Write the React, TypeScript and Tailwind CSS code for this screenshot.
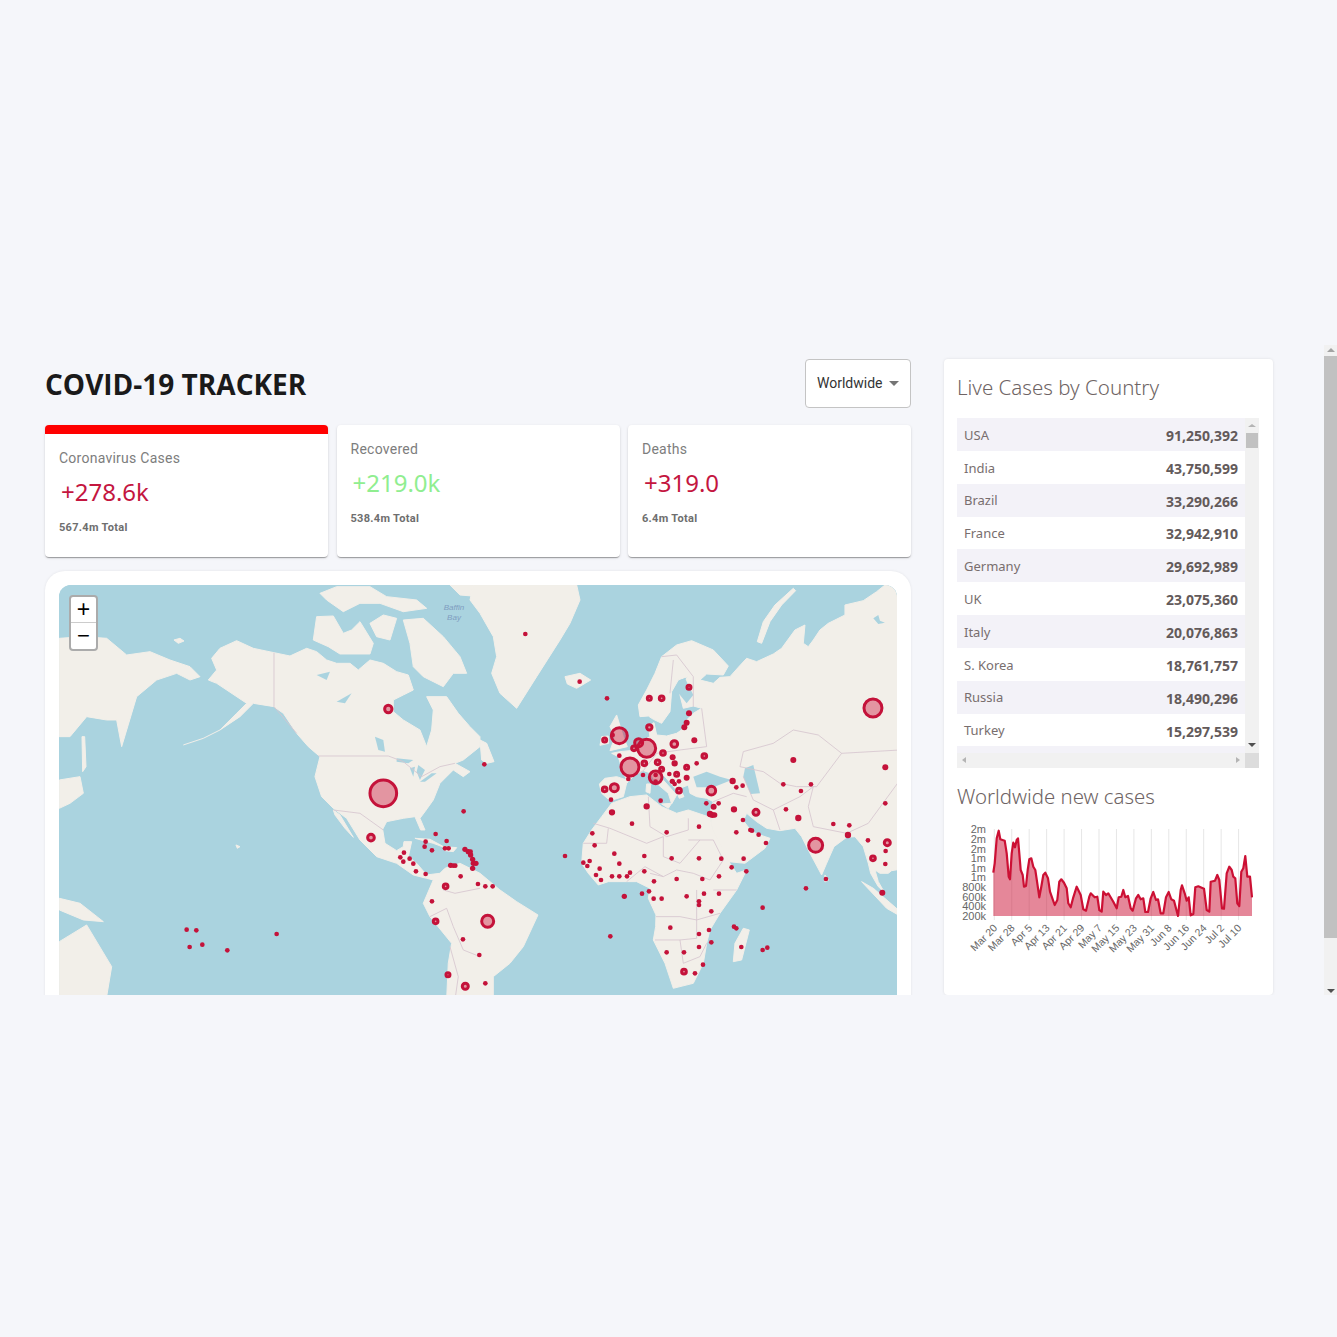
const SANS = "font-['Roboto',sans-serif]";
const rows: [string, string][] = [
  ["USA", "91,250,392"], ["India", "43,750,599"], ["Brazil", "33,290,266"], ["France", "32,942,910"],
  ["Germany", "29,692,989"], ["UK", "23,075,360"], ["Italy", "20,076,863"], ["S. Korea", "18,761,757"],
  ["Russia", "18,490,296"], ["Turkey", "15,297,539"],
];
const leftDots = [[1015,387,11],[1000,640,40],[963,773,10],[1241,694,2],[1157,762,2],[1127,785,2],[1124,800,2],[1146,811,2],[1190,783,2],[1185,805,2],[1196,805,2],[1245,808,3],[1255,815,3],[1262,825,3],[1268,838,3],[1270,850,3],[1278,850,3],[1268,865,3],[1262,815,2],[1202,856,3],[1210,857,2],[1216,857,2],[1062,818,2],[1051,832,2],[1079,836,2],[1060,845,2],[1090,851,2],[1098,874,2],[1127,882,2],[1232,889,2],[1284,912,2],[1187,919,7],[1146,964,2],[1157,1024,7],[1239,1078,2],[1194,1184,6],[1246,1219,9],[1288,1125,2],[410,1049,2],[439,1051,2],[419,1101,2],[457,1094,2],[532,1111,2],[680,1062,2]];
const rightDots = [[136,162,2],[299,305,2],[381,355,2],[13,553,2],[627,322,6],[508,355,6],[545,355,7],[627,400,4],[620,428,4],[613,442,4],[508,442,8],[418,467,24],[374,480,6],[398,465,2],[643,481,4],[476,488,12],[462,505,7],[500,505,27],[583,492,10],[418,527,2],[549,519,7],[673,528,7],[578,532,4],[584,550,5],[493,550,7],[533,547,7],[650,550,2],[450,561,27],[545,568,6],[620,562,6],[527,592,19],[590,583,6],[568,582,2],[489,585,2],[445,597,2],[620,593,4],[577,604,3],[597,604,2],[584,612,2],[527,585,2],[527,605,2],[403,623,12],[374,628,7],[597,632,7],[694,632,13],[758,603,5],[769,622,2],[788,617,2],[393,659,2],[542,662,2],[500,679,5],[396,697,5],[679,670,2],[701,680,4],[716,670,2],[762,688,5],[828,697,9],[690,702,5],[697,705,4],[704,705,3],[918,688,2],[955,714,5],[789,720,2],[811,750,2],[816,752,2],[769,757,2],[836,764,2],[858,789,2],[1007,796,21],[1060,732,2],[1108,736,2],[1104,765,5],[1164,781,2],[1222,788,9],[1217,813,2],[1179,835,7],[1216,852,2],[456,731,2],[560,757,2],[657,740,2],[337,760,2],[344,796,2],[403,821,2],[493,828,2],[575,835,2],[657,835,2],[724,836,2],[791,836,2],[255,828,2],[755,862,2],[310,848,2],[329,843,2],[322,858,2],[418,851,2],[359,866,2],[493,874,2],[799,874,2],[450,878,2],[348,885,2],[363,900,2],[396,889,2],[418,889,2],[441,889,2],[590,897,2],[667,897,2],[717,889,2],[522,904,2],[507,934,2],[486,941,2],[433,949,3],[521,956,2],[545,956,2],[620,949,2],[672,941,2],[717,941,2],[657,964,2],[657,975,2],[694,994,2],[848,983,2],[1038,897,2],[978,925,2],[1207,938,4],[762,1040,2],[769,1045,2],[571,1043,2],[687,1050,2],[657,1062,2],[391,1069,2],[694,1087,2],[784,1101,2],[657,1101,2],[848,1110,2],[862,1103,2],[560,1117,2],[612,1117,2],[669,1154,2],[612,1175,7],[645,1180,2],[16,1210,2],[23,1024,18],[940,540,4],[1216,562,4],[1179,384,27],[910,613,2],[963,633,2],[993,613,2],[1216,670,2],[16,919,2],[38,919,2]];

const leftLand = [
  "M485,235 L510,205 L560,182 L610,205 L672,218 L720,228 L770,205 L800,215 L830,240 L860,250 L900,250 L925,270 L960,240 L1000,250 L1040,275 L1075,285 L1090,330 L1060,345 L1030,360 L1030,395 L1060,420 L1110,450 L1130,500 L1145,450 L1150,390 L1130,350 L1190,350 L1225,400 L1260,440 L1290,470 L1290,500 L1240,540 L1215,550 L1260,575 L1240,590 L1210,570 L1170,610 L1150,660 L1125,695 L1110,715 L1125,750 L1112,750 L1095,710 L1060,715 L1010,725 L998,748 L1005,790 L1040,812 L1060,800 L1062,785 L1085,785 L1075,830 L1100,850 L1130,885 L1170,880 L1185,865 L1230,850 L1290,880 L1350,930 L1400,965 L1464,1005 L1420,1100 L1380,1150 L1330,1190 L1330,1260 L1190,1260 L1195,1150 L1205,1090 L1140,1010 L1120,970 L1150,900 L1130,895 L1090,885 L1040,850 L980,830 L930,780 L890,715 L850,685 L815,650 L795,590 L810,530 L775,500 L740,460 L700,400 L672,380 L610,370 L570,410 L510,450 L560,400 L590,370 L500,310 L475,300 L500,270 Z",
  "M850,690 L870,705 L910,772 L885,745 L855,705 Z",
  "M800,110 L850,108 L880,160 L905,150 L930,125 L970,190 L960,222 L870,222 L835,200 L790,180 Z",
  "M960,130 L1000,105 L1040,115 L1020,180 L980,170 Z",
  "M1060,120 L1120,115 L1180,170 L1230,230 L1250,280 L1210,280 L1180,320 L1120,290 L1090,260 L1080,190 Z",
  "M810,40 L860,20 L960,20 L1010,50 L1100,60 L1130,85 L1060,95 L990,70 L930,70 L880,95 L830,60 Z",
  "M1200,15 L1290,15 L1290,50 L1230,45 Z",
  "M28,175 L100,170 L170,175 L230,225 L300,215 L360,240 L420,260 L450,290 L420,300 L380,280 L320,300 L260,350 L215,500 L200,420 L170,420 L110,410 L60,470 L28,470 Z",
  "M96,470 L104,470 L108,560 L98,575 Z",
  "M28,600 L90,590 L100,640 L60,670 L28,685 Z",
  "M28,1085 L110,1035 L185,1160 L170,1250 L28,1250 Z",
  "M28,955 L90,970 L160,1025 L100,1020 L28,990 Z",
  "M372,180 L390,175 L402,183 L385,190 Z",
  "M1095,775 L1140,778 L1190,805 L1150,790 Z",
  "M1180,800 L1220,803 L1210,815 L1185,812 Z",
  "M558,795 L570,800 L562,805 Z",
];
const rightLand = [
  "M-20,15 L290,15 L300,60 L270,130 L240,180 L170,290 L110,385 L60,340 L35,280 L50,230 L40,170 L0,100 L-30,60 Z",
  "M255,290 L300,280 L332,300 L290,325 L262,312 Z",
  "M390,440 L410,405 L430,470 L442,500 L390,512 L405,470 Z",
  "M365,470 L385,468 L386,490 L360,496 Z",
  "M0,480 L20,490 L42,545 L20,550 L5,540 Z",
  "M365,640 L358,612 L375,595 L410,590 L440,600 L425,565 L415,530 L395,520 L420,515 L450,512 L470,500 L490,480 L510,470 L505,440 L522,428 L530,465 L560,468 L590,460 L612,445 L620,420 L640,400 L665,385 L640,378 L610,385 L600,345 L612,310 L622,290 L595,300 L575,335 L570,395 L545,430 L520,418 L505,408 L480,410 L475,375 L500,330 L525,280 L545,230 L590,195 L635,182 L700,210 L745,258 L730,285 L680,282 L660,300 L700,310 L720,292 L750,290 L775,262 L800,235 L830,245 L880,222 L905,205 L945,150 L975,135 L970,190 L985,200 L1000,180 L1020,150 L1045,130 L1095,105 L1095,75 L1150,62 L1190,35 L1215,15 L1260,15 L1260,868 L1235,872 L1225,880 L1200,880 L1185,870 L1195,905 L1212,935 L1195,920 L1172,880 L1165,850 L1150,800 L1125,770 L1100,772 L1062,800 L1040,850 L1025,885 L985,810 L965,770 L945,745 L900,752 L860,745 L830,725 L800,700 L790,722 L815,755 L840,765 L870,775 L855,805 L795,850 L745,845 L715,790 L697,745 L690,695 L700,665 L680,655 L650,650 L630,640 L625,615 L600,625 L612,650 L598,655 L585,625 L555,590 L528,566 L545,595 L590,645 L575,672 L565,640 L530,610 L510,578 L490,572 L465,585 L440,610 L430,650 L390,662 Z",
  "M395,670 L450,650 L500,645 L545,680 L590,700 L625,690 L690,712 L697,745 L750,850 L770,880 L800,870 L770,930 L720,1000 L690,1050 L680,1090 L670,1150 L640,1210 L580,1225 L555,1150 L520,1080 L527,1040 L528,1005 L505,955 L510,925 L470,905 L420,905 L385,905 L355,915 L325,880 L305,850 L310,790 L335,750 L365,710 Z",
  "M790,1045 L808,1050 L785,1140 L760,1145 L765,1090 Z",
  "M1145,905 L1180,925 L1255,990 L1255,1005 L1220,985 Z",
  "M1035,885 L1046,900 L1035,906 Z",
  "M940,25 L947,32 L905,75 L870,125 L845,190 L832,185 L850,125 L885,75 Z",
  "M500,612 L512,612 L510,640 L498,635 Z",
  "M545,672 L575,670 L565,685 Z",
];
const leftWater = [
  "M1040,535 L1090,540 L1075,550 L1040,545 Z", "M1080,565 L1095,560 L1090,590 Z", "M1105,555 L1125,570 L1110,600 L1100,575 Z", "M1110,605 L1145,580 L1160,580 L1125,605 Z",
  "M800,285 L840,275 L830,300 Z", "M860,365 L905,340 L885,370 Z", "M975,470 L1000,480 L1005,515 L985,510 Z",
];
const rightWater = [
  "M640,590 L680,575 L720,590 L755,600 L700,622 L650,622 Z",
  "M795,565 L820,555 L840,640 L812,642 L790,590 Z",
  "M600,300 L615,295 L640,345 L620,370 L600,345 Z",
  "M1180,115 L1195,105 L1200,122 L1215,128 L1195,132 Z",
];
const leftBorders = ["M672,218 L672,380 L740,460", "M805,528 L1015,528 L1060,545 L1115,590 L1170,560 L1215,550", "M850,690 L930,700 L1000,750", "M1180,930 L1215,940 L1290,925", "M1140,1010 L1190,985 L1210,1040 L1240,1110 L1290,1130", "M1200,1100 L1225,1190 L1215,1260"];
const rightBorders = [
  "M505,650 L510,740 L560,770 L625,750 L625,715", "M340,730 L390,745 L500,790 L550,770 L550,830 L600,850 L660,780", "M310,790 L380,790 L385,745", "M625,780 L700,780 L730,840 L690,900 L640,880 L590,870 L550,890 L510,880", "M440,905 L495,860 L550,890", "M528,1010 L600,1010 L650,1020 L650,1075 L600,1080 L525,1080", "M600,1080 L610,1150 L660,1130 L680,1090", "M650,930 L650,1020 L720,1000", "M700,930 L770,930",
  "M1260,510 L1085,520 L1015,465 L940,450 L880,490 L790,515 L780,560 L850,575", "M850,575 L900,610 L950,620 L1010,620 L1085,520", "M1000,620 L985,680 L1000,740 L1100,760 L1165,730 L1260,600", "M790,590 L820,660 L880,690 L900,750", "M700,665 L760,640 L800,650", "M880,690 L960,650 L1000,620", "M545,230 L590,225 L640,290 L640,380", "M570,340 L580,240", "M600,510 L680,500 L665,385", "M490,572 L530,520 L600,510", "M440,600 L490,572"];
const line = "130,188 134,160 140,85 146,62 151,88 164,92 170,130 176,200 180,208 185,130 190,98 195,112 200,90 204,85 208,130 212,180 218,195 222,230 228,228 233,180 238,148 244,145 250,170 256,180 262,220 268,262 274,230 280,195 286,188 294,205 300,245 306,262 314,285 322,270 328,215 334,208 342,218 350,235 355,280 362,292 370,262 380,230 392,255 400,298 408,302 418,260 422,250 434,262 442,260 448,300 455,305 460,245 468,255 475,250 490,275 500,295 506,262 514,260 520,240 526,262 534,258 542,295 548,302 558,265 565,255 572,268 580,265 586,306 594,306 602,265 610,246 618,270 624,268 632,310 640,310 648,262 656,246 664,268 672,272 684,318 692,240 696,226 704,250 710,272 716,262 722,316 730,312 736,232 745,229 762,236 770,300 778,305 782,215 795,212 802,195 808,210 816,295 822,296 830,190 838,170 845,180 850,200 856,205 862,280 868,288 874,185 880,175 886,138 892,200 900,200 906,262";
const yLabels = ["2m", "2m", "2m", "1m", "1m", "1m", "800k", "600k", "400k", "200k"];
const xLabels = ["Mar 20", "Mar 28", "Apr 5", "Apr 13", "Apr 21", "Apr 29", "May 7", "May 15", "May 23", "May 31", "Jun 8", "Jun 16", "Jun 24", "Jul 2", "Jul 10"];

function Dots({ data }: { data: number[][] }) {
  return (
    <>
      {data.map(([x, y, r], i) =>
        r <= 4 ? (
          <circle key={i} cx={x} cy={y} r={r + 5} fill="#C4123A" />
        ) : (
          <circle key={i} cx={x} cy={y} r={r} fill="#CC1034" fillOpacity={0.4} stroke="#C4123A" strokeWidth={9} />
        )
      )}
    </>
  );
}

function WorldMap() {
  return (
    <svg className="absolute inset-0 w-full h-full" viewBox="59 585 838 500" preserveAspectRatio="xMinYMin slice">
      <rect x="59" y="585" width="838" height="500" fill="#aad3df" />
      <g transform="translate(50 580) scale(0.3333)">
        {leftLand.map((d, i) => <path key={i} d={d} fill="#f2efe9" stroke="#f2efe9" strokeWidth="3" strokeLinejoin="round" />)}
        <path d="M510,450 L460,475 L400,495" fill="none" stroke="#f2efe9" strokeWidth="3" />
        {leftWater.map((d, i) => <path key={i} d={d} fill="#aad3df" />)}
        {leftBorders.map((d, i) => <path key={i} d={d} fill="none" stroke="#d6c5cf" strokeWidth="2.5" />)}
      </g>
      <g transform="translate(480 580) scale(0.3333)">
        {rightLand.map((d, i) => <path key={i} d={d} fill="#f2efe9" stroke="#f2efe9" strokeWidth="3" strokeLinejoin="round" />)}
        {rightWater.map((d, i) => <path key={i} d={d} fill="#aad3df" />)}
        {rightBorders.map((d, i) => <path key={i} d={d} fill="none" stroke="#d6c5cf" strokeWidth="2.5" />)}
      </g>
      <g transform="translate(50 580) scale(0.3333)"><Dots data={leftDots} /></g>
      <g transform="translate(480 580) scale(0.3333)"><Dots data={rightDots} /></g>
      <text x="454" y="610" textAnchor="middle" fontSize="8" fontStyle="italic" fill="#7f9dc0" fontFamily="Liberation Sans, sans-serif">Baffin</text>
      <text x="454" y="620" textAnchor="middle" fontSize="8" fontStyle="italic" fill="#7f9dc0" fontFamily="Liberation Sans, sans-serif">Bay</text>
    </svg>
  );
}

function Chart() {
  const pts = line.split(" ").map((p) => p.split(",").map(Number));
  const toX = (x: number) => x / 3 - 7;
  const toY = (y: number) => y / 3;
  const lineStr = pts.map(([x, y]) => `${toX(x).toFixed(1)},${toY(y).toFixed(1)}`).join(" ");
  const area = `${toX(130).toFixed(1)},106 ${lineStr} ${toX(906).toFixed(1)},106`;
  return (
    <svg width="302" height="170" viewBox="0 0 302 170" className="block">
      {xLabels.map((l, i) => {
        const x = 37.3 + i * 17.45;
        return (
          <g key={l}>
            <line x1={x} x2={x} y1="19" y2="110" stroke="#000" strokeOpacity="0.1" />
            <text x={x - 2} y="113" textAnchor="end" fontSize="10.5" fill="#666" fontFamily="Liberation Sans, sans-serif" transform={`rotate(-45 ${x - 2} 113)`} dominantBaseline="hanging">{l}</text>
          </g>
        );
      })}
      {yLabels.map((l, i) => (
        <text key={i} x="29" y={19.3 + i * 9.6} dy="4" textAnchor="end" fontSize="11" fill="#666" fontFamily="Liberation Sans, sans-serif">{l}</text>
      ))}
      <polygon points={area} fill="#CC1034" fillOpacity="0.5" />
      <polyline points={lineStr} fill="none" stroke="#CC1034" strokeWidth="2.2" strokeLinejoin="round" />
    </svg>
  );
}

function StatCard({ title, value, total, active, green }: { title: string; value: string; total: string; active?: boolean; green?: boolean }) {
  return (
    <div className={`flex-1 bg-white rounded overflow-hidden shadow-[0_2px_1px_-1px_rgba(0,0,0,0.2),0_1px_1px_0_rgba(0,0,0,0.14),0_1px_3px_0_rgba(0,0,0,0.12)] ${active ? "border-t-[9px] border-[#ff0000]" : ""}`}>
      <div className="pl-[14px] pt-[15px] pb-[24px]">
        <div className={`${SANS} text-[14px] leading-[18px] text-[#7d7d7d] tracking-[0.25px]`}>{title}</div>
        <div className={`font-['Noto_Sans',sans-serif] text-[24px] leading-[34px] mt-[8px] pl-[2px] ${green ? "text-[#90ee90]" : "text-[#c4163f]"}`}>{value}</div>
        <div className={`${SANS} text-[11px] font-bold leading-[14px] mt-[12px] tracking-[0.3px] text-[#6e6e6e]`}>{total}</div>
      </div>
    </div>
  );
}

export default function App() {
  return (
    <div className="min-h-screen bg-[#f5f6fa] pt-[345px]">
      <div className="w-full h-[650px] flex overflow-hidden">
        <div className="flex-1 min-w-0 overflow-hidden flex gap-[33px] pl-[45px] pr-[51px] pt-[14px]">
          <div className="w-[866px] shrink-0">
            <div className="flex items-center justify-between h-[48px] mb-[18px]">
              <h1 className="font-['Open_Sans',sans-serif] text-[28px] font-bold text-[#1a1a1a] leading-none pt-[2px]">COVID-19 TRACKER</h1>
              <div className={`${SANS} w-[106px] h-[49px] bg-white border border-[#c4c4c4] rounded flex items-center pl-[11px] gap-[7px] text-[14px] text-[#333]`}>
                Worldwide
                <span className="w-0 h-0 border-x-[5px] border-x-transparent border-t-[5px] border-t-[#757575]" />
              </div>
            </div>
            <div className="flex gap-[8.5px] h-[132px]">
              <StatCard title="Coronavirus Cases" value="+278.6k" total="567.4m Total" active />
              <StatCard title="Recovered" value="+219.0k" total="538.4m Total" green />
              <StatCard title="Deaths" value="+319.0" total="6.4m Total" />
            </div>
            <div className="mt-[14px] bg-white rounded-[20px] p-[14px] shadow-[0_0_3px_rgba(0,0,0,0.08)]">
              <div className="relative h-[500px] rounded-[12px] overflow-hidden bg-[#aad3df]">
                <WorldMap />
                <div className="absolute left-[10px] top-[10px] w-[29px] border-2 border-[#ababab] rounded bg-white flex flex-col">
                  <div className="h-[26px] flex items-center justify-center border-b border-[#ccc] font-['Liberation_Sans',sans-serif] text-[23px] text-black leading-none">+</div>
                  <div className="h-[26px] flex items-center justify-center font-['Liberation_Sans',sans-serif] text-[22px] text-black leading-none">−</div>
                </div>
              </div>
            </div>
          </div>
          <div className="w-[329px] shrink-0 bg-white rounded shadow-[0_0_3px_rgba(0,0,0,0.1)] px-[13px] font-['Noto_Sans',sans-serif] text-[#6e6464]">
            <h3 className="text-[20.5px] font-light leading-[28px] pt-[14px] h-[59px]">Live Cases by Country</h3>
            <div className="flex w-[302px] h-[350px] bg-[#f1f1f1]">
              <div className="flex-1 flex flex-col">
                {rows.map(([c, n], i) => (
                  <div key={c} className={`h-[32.85px] shrink-0 flex items-center justify-between px-[7px] pt-[2px] ${i % 2 === 0 ? "bg-[#f3f2f8]" : "bg-white"}`}>
                    <span className="text-[13px] text-[#786e6e]">{c}</span>
                    <b className="font-bold text-[14px] text-[#635a5a]">{n}</b>
                  </div>
                ))}
                <div className="h-[6.5px] bg-[#f3f2f8]" />
                <div className="h-[15px] flex items-center justify-between px-[5px]">
                  <span className="w-0 h-0 border-y-[3px] border-y-transparent border-r-[4px] border-r-[#b4b4b4]" />
                  <span className="w-0 h-0 border-y-[3px] border-y-transparent border-l-[4px] border-l-[#b4b4b4]" />
                </div>
              </div>
              <div className="w-[14px] flex flex-col items-center">
                <span className="mt-[6px] w-0 h-0 border-x-[4px] border-x-transparent border-b-[3px] border-b-[#b4b4b4]" />
                <div className="mt-[6px] w-[12px] h-[15px] bg-[#c1c1c1]" />
                <div className="flex-1" />
                <span className="mb-[6px] w-0 h-0 border-x-[4px] border-x-transparent border-t-[4px] border-t-[#505050]" />
                <div className="w-[14px] h-[15px] bg-[#dcdcdc]" />
              </div>
            </div>
            <h3 className="text-[20.4px] font-light leading-[28px] mt-[14px]">Worldwide new cases</h3>
            <div><Chart /></div>
          </div>
        </div>
        <div className="w-[13px] bg-[#f1f1f1] flex flex-col items-center shrink-0">
          <span className="mt-[3px] w-0 h-0 border-x-[4px] border-x-transparent border-b-[4px] border-b-[#a3a3a3]" />
          <div className="mt-[4px] w-full h-[582px] bg-[#c1c1c1]" />
          <div className="flex-1" />
          <span className="mb-[2px] w-0 h-0 border-x-[4px] border-x-transparent border-t-[4px] border-t-[#505050]" />
        </div>
      </div>
    </div>
  );
}
